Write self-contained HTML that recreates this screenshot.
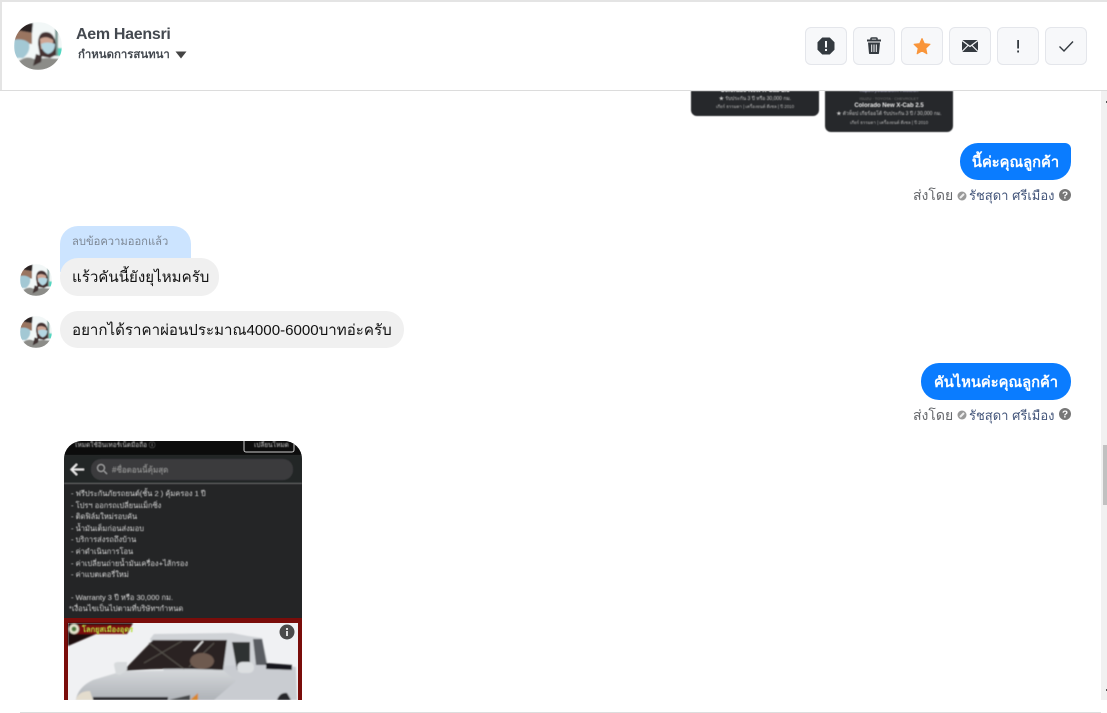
<!DOCTYPE html>
<html><head><meta charset="utf-8">
<style>
html,body{margin:0;padding:0;background:#fff}
body{width:1107px;height:713px;position:relative;overflow:hidden;font-family:"Liberation Sans","Noto Sans CJK SC",sans-serif}
.a{position:absolute}
.btn{position:absolute;top:27px;width:40px;height:36px;background:#f7f8fa;border:1px solid #e4e6eb;border-radius:6px}
.btn svg{position:absolute;left:0;top:0}
.me{position:absolute;background:#0a7cff;color:#fff;font-size:14.7px;font-weight:bold;height:37px;line-height:40px;border-radius:18px;text-align:center;white-space:nowrap}
.them{position:absolute;background:#f0f0f0;color:#111;font-size:15.1px;height:37px;line-height:40px;border-radius:18px;padding-left:12px;white-space:nowrap;box-sizing:border-box}
.meta{position:absolute;font-size:14px;line-height:18px;color:#65676b;white-space:nowrap}
.meta b{font-weight:normal;color:#43557a;font-size:13px}
.l{position:absolute;left:0;width:100%;text-align:center;white-space:nowrap}
</style></head><body>
<svg width="0" height="0" style="position:absolute"><defs>
<clipPath id="cc"><circle cx="24" cy="24" r="24"/></clipPath>
<filter id="avb"><feGaussianBlur stdDeviation=".7"/></filter>
<symbol id="av" viewBox="0 0 48 48"><g clip-path="url(#cc)"><g filter="url(#avb)">
<rect width="48" height="48" fill="#f2f7f7"/>
<rect x="41" y="2" width="3" height="32" fill="#7f9c98"/>
<rect x="44" y="26" width="4" height="8" fill="#4fd6c0"/>
<path d="M0 12Q6 1 19 1L18 11L6 9Z" fill="#2a2224"/>
<path d="M1 10L7 9L18 11L18 22L0 20Z" fill="#9a7460"/>
<path d="M0 18Q9 16 15 21Q17 30 9 36L0 36Z" fill="#a3c8d4"/>
<path d="M24 22Q24 10 32 10Q40 10 42 22L42 33L36 36L26 34Z" fill="#453230"/>
<path d="M26 17Q32 13 39 18L39 27L27 27Z" fill="#cfa694"/>
<path d="M27 22Q33 19 41 22Q41 30 34 32Q28 30 27 22Z" fill="#b5d7e2"/>
<path d="M0 44Q10 32 20 37L32 36L48 37V48H0Z" fill="#8c8c88"/>
<path d="M22 32L19 44L27 40L28 34Z" fill="#3f3230"/>
</g></g></symbol>
<symbol id="qm" viewBox="0 0 12 12"><circle cx="6" cy="6" r="6" fill="#777"/><text x="6" y="9.5" font-size="10" font-weight="bold" text-anchor="middle" fill="#fff" font-family="Liberation Sans">?</text></symbol>
<symbol id="ok" viewBox="0 0 10 10"><circle cx="5" cy="5" r="4.5" fill="#999"/><path d="M3 7L7 3" stroke="#eee" stroke-width="2"/></symbol>
</defs></svg>

<!-- frame -->
<div class="a" style="left:0;top:0;width:1107px;height:2px;background:#e4e4e4"></div>
<div class="a" style="left:0;top:0;width:2px;height:91px;background:#e4e4e4"></div>
<div class="a" style="left:0;top:90px;width:1107px;height:1px;background:#dcdcdc;z-index:5"></div>

<!-- header -->
<svg class="a" style="left:14px;top:22px" width="48" height="48"><use href="#av"/></svg>
<div class="a" style="left:76px;top:25px;font-size:16px;line-height:20px;font-weight:bold;color:#444950;white-space:nowrap;letter-spacing:-.3px">Aem Haensri</div>
<div class="a" style="left:78px;top:47px;font-size:11.4px;line-height:16px;color:#444950;white-space:nowrap;font-weight:bold">กำหนดการสนทนา</div>
<svg class="a" style="left:175px;top:51px" width="12" height="8"><path d="M0.5 0.5H11.5L6 7.5Z" fill="#444"/></svg>

<div class="btn" style="left:805px"><svg width="40" height="36"><path d="M16.500 10H23.500L28 14.500V21.500L23.500 26H16.500L12 21.500V14.500Z" fill="#343a40" stroke="#343a40" stroke-linejoin="round"/><rect x="19" y="13" width="2" height="6.500" fill="#f7f8fa"/><rect x="19" y="21" width="2" height="2" fill="#f7f8fa"/></svg></div>
<div class="btn" style="left:853px"><svg width="40" height="36"><path d="M13 12.500H27" stroke="#343a40" stroke-width="2"/><path d="M17 12V10.500Q17 10 18 10H22Q23 10 23 10.500V12" stroke="#343a40" fill="none" stroke-width="1.500"/><path d="M14 14.500H26L25 25.500Q25 26 24 26H16Q15 26 15 25.500Z" fill="#343a40"/><path d="M17.700 16.500V24M20 16.500V24M22.300 16.500V24" stroke="#f7f8fa" stroke-width="1"/></svg></div>
<div class="btn" style="left:901px"><svg width="40" height="36"><path d="M20 10.500L22.300 15.600L28 16.300L23.800 20.200L24.900 25.800L20 23L15.100 25.800L16.200 20.200L12 16.300L17.700 15.600Z" fill="#f9953a" stroke="#f9953a" stroke-linejoin="round"/></svg></div>
<div class="btn" style="left:949px"><svg width="40" height="36"><rect x="12" y="12" width="16" height="12" rx="1" fill="#343a40"/><path d="M12 12.500L20 18.500L28 12.500M12 23.500L18 17.500M28 23.500L22 17.500" stroke="#f7f8fa" stroke-width="1.200" fill="none"/></svg></div>
<div class="btn" style="left:997px"><svg width="40" height="36"><rect x="19.200" y="12" width="1.800" height="8.500" fill="#343a40"/><rect x="19.200" y="22.500" width="1.800" height="2" fill="#343a40"/></svg></div>
<div class="btn" style="left:1045px"><svg width="40" height="36"><path d="M13.500 18.500L18 23L27 13.500" stroke="#343a40" stroke-width="1.400" fill="none"/></svg></div>

<!-- top images -->
<div class="a" style="left:691px;top:91px;width:128px;height:25px;background:#26282b;border-radius:0 0 6px 6px;overflow:hidden;filter:blur(.4px)">
<div class="l" style="top:-4px;font-size:6px;line-height:8px;font-weight:bold;color:#eee">Colorado New X-Cab 2.5</div>
<div class="l" style="top:4px;font-size:5px;line-height:8px;color:#ccc">★ รับประกัน 3 ปี หรือ 30,000 กม.</div>
<div class="l" style="top:12px;font-size:4.400px;line-height:8px;color:#bbb">เกียร์ ธรรมดา | เครื่องยนต์ ดีเซล | ปี 2010</div>
</div>
<div class="a" style="left:825px;top:91px;width:128px;height:41px;background:#26282b;border-radius:0 0 6px 6px;overflow:hidden;filter:blur(.4px)">
<div class="l" style="top:-4px;font-size:5px;line-height:8px;color:#aac">https://youtu.be/X-Hilotech</div>
<div class="l" style="top:4px;font-size:4px;line-height:8px;color:#777">ISUZU · TOYOTA · CHEVROLET</div>
<div class="l" style="top:11px;font-size:6px;line-height:8px;font-weight:bold;color:#eee">Colorado New X-Cab 2.5</div>
<div class="l" style="top:19px;font-size:5px;line-height:8px;color:#ccc">★ ตัวท็อป เกียร์ออโต้ รับประกัน 3 ปี / 30,000 กม.</div>
<div class="l" style="top:28px;font-size:4.400px;line-height:8px;color:#bbb">เกียร์ ธรรมดา | เครื่องยนต์ ดีเซล | ปี 2010</div>
</div>

<!-- messages -->
<div class="me" style="left:960px;top:143px;width:111px;border-top-right-radius:6px">นี้ค่ะคุณลูกค้า</div>
<div class="meta" style="left:913px;top:186px">ส่งโดย</div>
<svg class="a" style="left:957px;top:191px" width="10" height="10"><use href="#ok"/></svg>
<div class="meta" style="left:969px;top:186px"><b>รัชสุดา ศรีเมือง</b></div>
<svg class="a" style="left:1059px;top:189px" width="12" height="12"><use href="#qm"/></svg>

<div class="a" style="left:60px;top:226px;width:131px;height:46px;background:#cce4ff;border-radius:18px 18px 0 0"></div>
<div class="a" style="left:72px;top:233px;font-size:11.200px;line-height:18px;color:#7d8794;white-space:nowrap">ลบข้อความออกแล้ว</div>
<div class="them" style="left:60px;top:258px;width:159px;height:38px">แร้วคันนี้ยังยุไหมครับ</div>
<svg class="a" style="left:20px;top:264px" width="32" height="32"><use href="#av"/></svg>

<div class="them" style="left:60px;top:311px;width:344px">อยากได้ราคาผ่อนประมาณ4000-6000บาทอ่ะครับ</div>
<svg class="a" style="left:20px;top:316px" width="32" height="32"><use href="#av"/></svg>

<div class="me" style="left:921px;top:363px;width:150px">คันไหนค่ะคุณลูกค้า</div>
<div class="meta" style="left:913px;top:406px">ส่งโดย</div>
<svg class="a" style="left:957px;top:410px" width="10" height="10"><use href="#ok"/></svg>
<div class="meta" style="left:969px;top:406px"><b>รัชสุดา ศรีเมือง</b></div>
<svg class="a" style="left:1059px;top:408px" width="12" height="12"><use href="#qm"/></svg>

<!-- phone screenshot -->
<div class="a" style="left:64px;top:441px;width:238px;height:259px;border-radius:18px 18px 0 0;overflow:hidden;background:#242526">
<svg width="238" height="259" style="display:block">
<defs><filter id="bl"><feGaussianBlur stdDeviation=".4"/></filter><filter id="bl2"><feGaussianBlur stdDeviation=".8"/></filter>
<linearGradient id="body" x1="0" y1="0" x2="0" y2="1"><stop offset="0" stop-color="#d4d7da"/><stop offset="1" stop-color="#aeb2b7"/></linearGradient></defs>
<rect width="238" height="14" fill="#0c0c0c"/>
<rect x="180" y="-4" width="50" height="15" rx="2" fill="#0c0c0c" stroke="#ccc"/>
<g filter="url(#bl)" font-family="Liberation Sans,sans-serif" fill="#ddd">
<text x="10" y="6" font-size="6.500" fill="#ccc">โหมดใช้อินเทอร์เน็ตมือถือ ⓘ</text>
<text x="190" y="6" font-size="6.500" fill="#ccc">เปลี่ยนโหมด</text>
<rect x="0" y="14" width="238" height="28" fill="#242526"/>
<rect x="0" y="42" width="238" height="1" fill="#666"/>
<rect x="27" y="18" width="202" height="21" rx="10" fill="#3a3b3c"/>
<circle cx="37" cy="27" r="3.500" fill="none" stroke="#aaa"/><path d="M40 30L43 33" stroke="#aaa"/>
<text x="48" y="31.500" font-size="8" fill="#999">#ชื่อตอนนี้คุ้มสุด</text>
<path d="M20 28.500H8M13 23L7.500 28.500L13 34" stroke="#eee" stroke-width="1.800" fill="none"/>
<g font-size="7.500">
<text x="7" y="55">- ฟรีประกันภัยรถยนต์(ชั้น 2 ) คุ้มครอง 1 ปี</text>
<text x="7" y="67">- โปรฯ ออกรถเปลี่ยนแม็กซิ่ง</text>
<text x="7" y="78">- ติดฟิล์มใหม่รอบคัน</text>
<text x="7" y="90">- น้ำมันเต็มก่อนส่งมอบ</text>
<text x="7" y="101">- บริการส่งรถถึงบ้าน</text>
<text x="7" y="113">- ค่าดำเนินการโอน</text>
<text x="7" y="125">- ค่าเปลี่ยนถ่ายน้ำมันเครื่อง+ไส้กรอง</text>
<text x="7" y="136">- ค่าแบตเตอรี่ใหม่</text>
<text x="7" y="159">- Warranty 3 ปี หรือ 30,000 กม.</text>
<text x="5" y="170">*เงื่อนไขเป็นไปตามที่บริษัทฯกำหนด</text>
</g></g>
<rect y="177" width="238" height="82" fill="#7a0d0a"/>
<rect x="4" y="182" width="230" height="77" fill="#f0f1f3"/>
<g filter="url(#bl2)">
<path d="M4 182H69L63 193H32L4 205Z" fill="#1a0808"/>
<path d="M86 198L90 193L168 192L184 195L198 197L204 224L230 226L233 259H100V230Z" fill="#cfd2d6"/>
<path d="M160 225L202 222L232 226L233 259H150Z" fill="#c9ccd1"/>
<path d="M12 259Q14 246 29 239L59 230L159 229L172 240L150 259Z" fill="url(#body)"/>
<path d="M59 230L89 199H163L159 229Q105 226 59 230Z" fill="#2a2321"/>
<path d="M85 202L120 228M118 200L80 222M125 226L150 202" stroke="#5a5650" stroke-width="1"/>
<path d="M139 200L130 210" stroke="#eee" stroke-width="1.500"/>
<ellipse cx="138" cy="220" rx="12" ry="8" fill="#6e5a50"/>
<path d="M168 201H186V222L173 229Z" fill="#2f3032"/>
<path d="M189 198H198L203 224H192Z" fill="#5a5d62"/>
<path d="M202 222L228 224V229L202 228Z" fill="#17181a"/>
<rect x="173" y="221" width="17" height="11" rx="5" fill="#dcdfe1"/>
<path d="M50 224Q50 221 54 221H63V229L56 234L52 233Z" fill="#d7dadc"/>
<rect x="29" y="256" width="75" height="3" fill="#25262a"/>
<path d="M12 259Q14 250 26 250L29 259Z" fill="#e3dccd"/>
<path d="M126 259L134 252V259Z" fill="#d8862a"/>
<path d="M104 259L126 254V259Z" fill="#45474a"/>
<path d="M213 259Q216 251 223 252L227 259Z" fill="#25262a"/>
<path d="M8 184L9 193H62L68 184Z" fill="#7a0d0a"/>
<circle cx="10" cy="188" r="5" fill="#e8e8d0"/><circle cx="10" cy="188" r="2.500" fill="#4a7a3a"/>
</g>
<text x="18" y="191" font-size="7.500" font-weight="bold" fill="#b8e040" font-family="Liberation Sans,sans-serif" filter="url(#bl)">โลกยูสเมืองอุดร</text>
<circle cx="223" cy="191" r="7.500" fill="#4a4a4a"/><rect x="222" y="190" width="2" height="5" fill="#ddd"/><rect x="222" y="187" width="2" height="2" fill="#ddd"/>
</svg>
</div>

<!-- scrollbar + bottom line -->
<div class="a" style="left:1101px;top:91px;width:6px;height:609px;background:#f1f1f1"></div>
<div class="a" style="left:1103px;top:445px;width:4px;height:60px;background:#c1c1c1"></div>
<div class="a" style="left:1106px;top:101px;width:1px;height:2px;background:#555"></div>
<div class="a" style="left:1106px;top:689px;width:1px;height:2px;background:#555"></div>
<div class="a" style="left:20px;top:712px;width:1081px;height:1px;background:#ddd"></div>
</body></html>
